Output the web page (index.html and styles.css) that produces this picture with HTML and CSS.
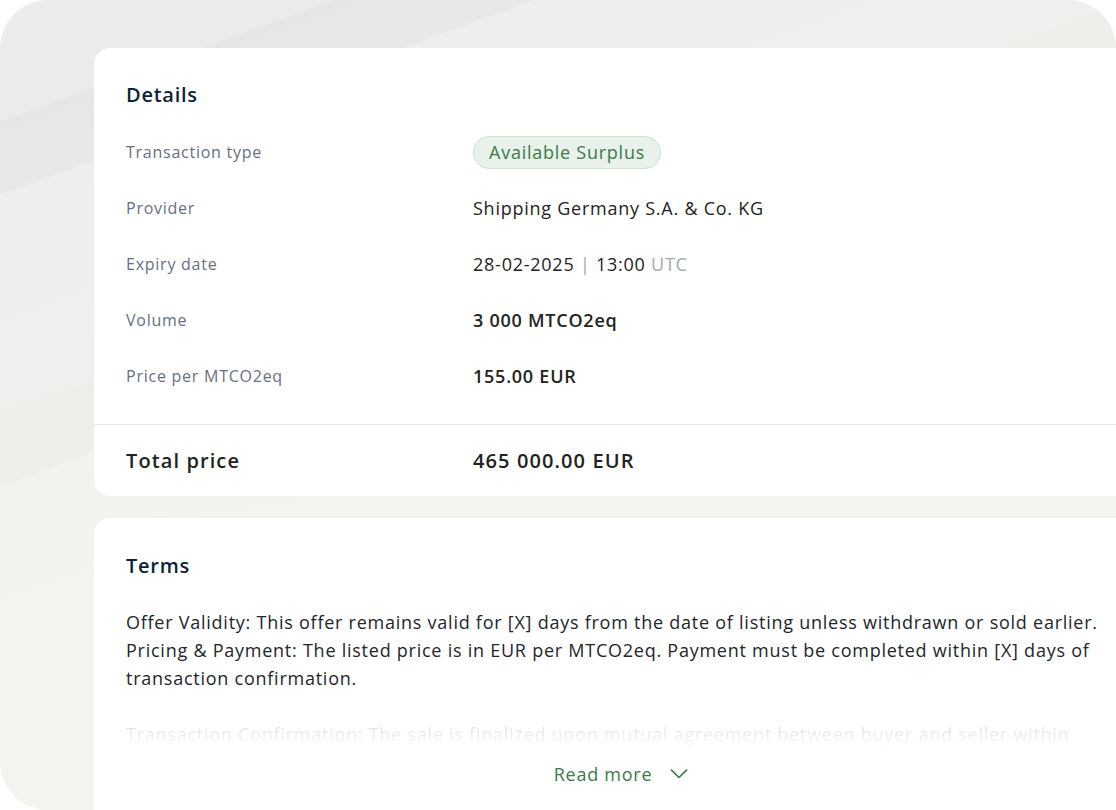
FILE: index.html
```html
<!DOCTYPE html>
<html>
<head>
  <meta charset="utf-8">
  <title>Offer details</title>
  <link rel="stylesheet" href="styles.css">
</head>
<body>

<div class="frame">

  <section class="card details">
    <h2 class="card-title">Details</h2>

    <dl class="rows">
      <div class="row">
        <dt>Transaction type</dt>
        <dd><span class="pill">Available Surplus</span></dd>
      </div>
      <div class="row">
        <dt>Provider</dt>
        <dd>Shipping Germany S.A. &amp; Co. KG</dd>
      </div>
      <div class="row">
        <dt>Expiry date</dt>
        <dd>28-02-2025 <span class="sep">|</span> 13:00 <span class="muted">UTC</span></dd>
      </div>
      <div class="row">
        <dt>Volume</dt>
        <dd class="strong">3 000 MTCO2eq</dd>
      </div>
      <div class="row">
        <dt>Price per MTCO2eq</dt>
        <dd class="strong">155.00 EUR</dd>
      </div>
    </dl>

    <div class="total">
      <span class="total-label">Total price</span>
      <span class="total-value">465 000.00 EUR</span>
    </div>
  </section>

  <section class="card terms">
    <h2 class="card-title">Terms</h2>

    <div class="terms-text">
      <p>Offer Validity: This offer remains valid for [X] days from the date of listing unless withdrawn or sold earlier.<br>
      Pricing &amp; Payment: The listed price is in EUR per MTCO2eq. Payment must be completed within [X] days of transaction confirmation.</p>
      <p>Transaction Confirmation: The sale is finalized upon mutual agreement between buyer and seller within</p>
    </div>

    <button class="read-more">
      Read more
      <svg width="18" height="10" viewBox="0 0 18 10" fill="none">
        <path d="M1.5 1.2l7.5 7.3 7.5-7.3" stroke="currentColor" stroke-width="1.7" stroke-linecap="round" stroke-linejoin="round"/>
      </svg>
    </button>
  </section>

</div>

</body>
</html>
```

FILE: styles.css
```css
html, body {
  margin: 0;
  background: #fff;
  overflow: hidden;
}

body {
  font-family: "Open Sans", "Noto Sans", sans-serif;
  letter-spacing: 0.047em;
  color: #1f2421;
}

.frame {
  box-sizing: border-box;
  width: 1116px;
  height: 810px;
  padding: 48px 0 0 94px;
  border-radius: 48px;
  display: flex;
  flex-direction: column;
  gap: 22px;
  background: linear-gradient(160deg,
    #ececeb 0%, #ebebea 10%,
    #e6e6e4 10%, #e8e8e6 16%,
    #eeeeec 16%, #efefed 34%,
    #ededea 34%, #eeeeeb 40%,
    #f2f2ee 40%, #f4f4f0 100%);
}

.card {
  box-sizing: border-box;
  width: 1054px;
  flex-shrink: 0;
  background: #fff;
  border-radius: 16px;
}

.card-title {
  margin: 0;
  font-size: 20px;
  line-height: 30px;
  font-weight: 600;
  color: #0e1f3b;
}

/* details */

.details {
  padding-top: 32px;
}

.details .card-title {
  padding: 0 32px;
}

.rows {
  margin: 14px 0 0;
  padding: 0 32px 20px;
  border-bottom: 1px solid #e7e8e8;
}

.row {
  display: flex;
  align-items: center;
  height: 56px;
}

.row dt {
  width: 347px;
  font-size: 16px;
  color: #677080;
}

.row dd {
  margin: 0;
  font-size: 18px;
  color: #1f2421;
}

.row dd.strong {
  font-weight: 600;
}

.sep {
  color: #a3a7ad;
}

.muted {
  color: #a3a7ad;
}

.pill {
  display: inline-block;
  height: 31px;
  line-height: 31px;
  padding: 0 15px;
  border: 1px solid #cfe2d4;
  border-radius: 16px;
  background: #e8f1ea;
  color: #3b7a4b;
}

.total {
  display: flex;
  align-items: center;
  height: 71px;
  padding: 0 32px;
}

.total-label,
.total-value {
  font-size: 20px;
  font-weight: 600;
  letter-spacing: 0.055em;
  color: #1f2421;
}

.total-label {
  width: 347px;
}

/* terms */

.terms {
  padding: 33px 32px 60px;
}

.terms-text {
  position: relative;
  margin-top: 27px;
  height: 152px;
  overflow: hidden;
  font-size: 18px;
  line-height: 28px;
  color: #23262a;
}

.terms-text p {
  margin: 0 0 28px;
}

.terms-text::after {
  content: "";
  position: absolute;
  left: 0;
  right: 0;
  bottom: 0;
  height: 60px;
  background: linear-gradient(rgba(255, 255, 255, 0.7), #fff 80%);
}

.read-more {
  display: flex;
  align-items: center;
  gap: 18px;
  margin: 0 auto;
  padding: 0;
  border: 0;
  background: none;
  font-family: inherit;
  font-size: 18px;
  line-height: 28px;
  letter-spacing: inherit;
  color: #3b7a4b;
}
```
